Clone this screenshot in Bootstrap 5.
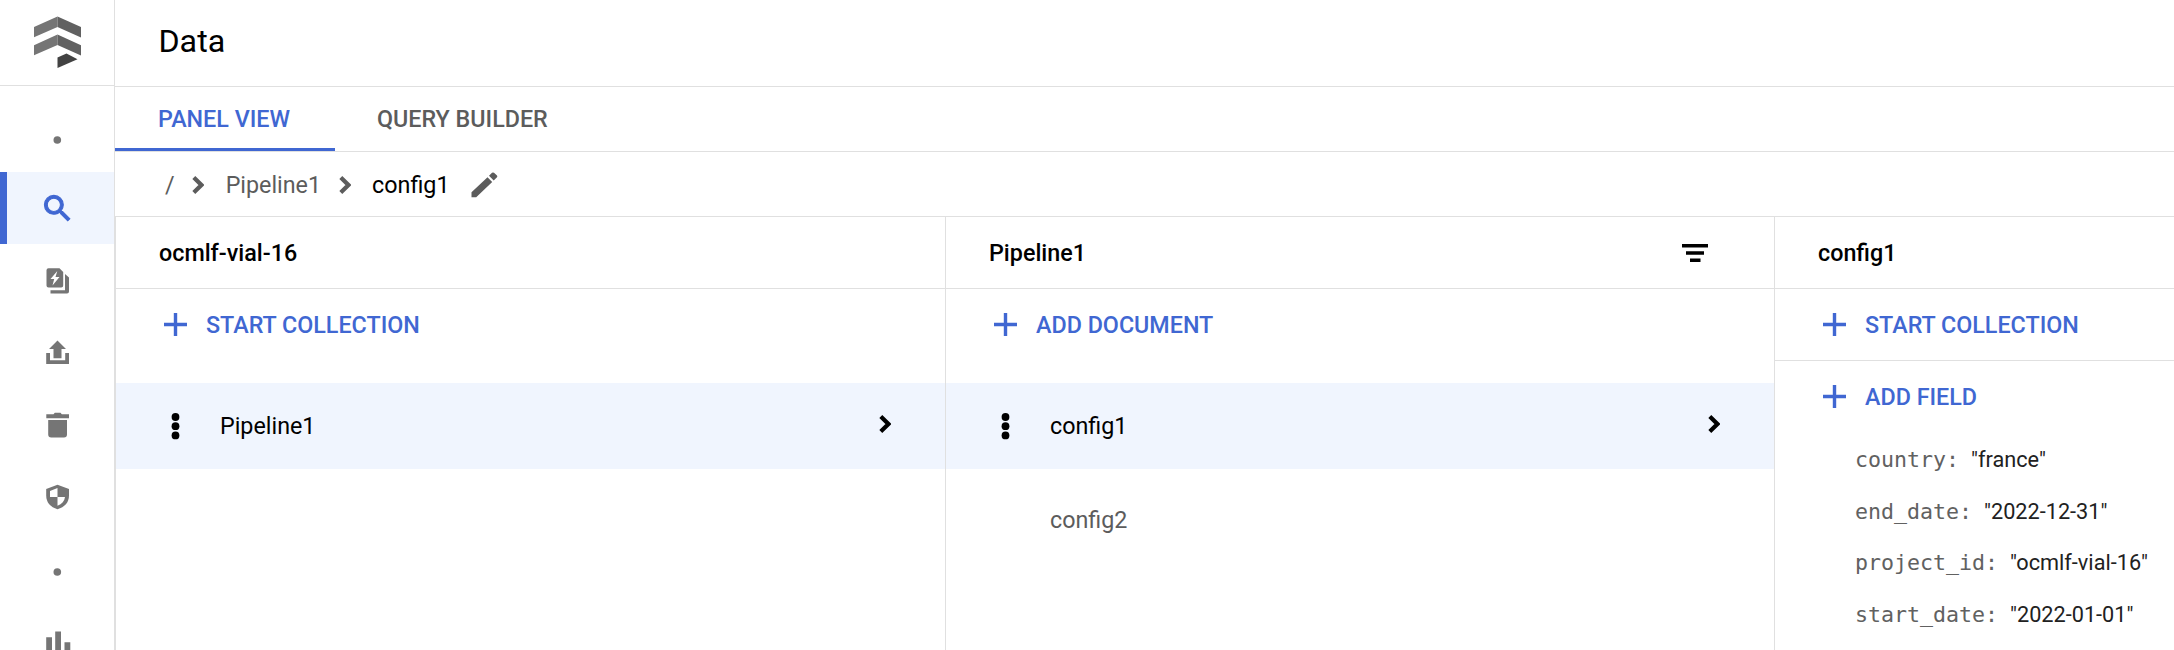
<!DOCTYPE html>
<html lang="en">
<head>
<meta charset="utf-8">
<title>Data</title>
<link href="https://cdn.jsdelivr.net/npm/bootstrap@5.3.0/dist/css/bootstrap.min.css" rel="stylesheet">
<style>
:root{--line:#e0e0e0;--blue:#4067d2;--tint:#f0f5fe;--ink:#000;--mute:#5c5c5c;--ico:#757575}
body{font-family:Roboto,sans-serif;font-size:23.3px;line-height:30px;color:var(--ink);height:650px;overflow:hidden}
svg{display:block;flex:none}
.rail{width:115px;border-right:1px solid var(--line);flex:none}
.rail-logo{height:86px;border-bottom:1px solid var(--line)}
.rail-item{height:72px;flex:none;color:var(--ico);padding-top:1px}
.rail-item svg,.rail-dot svg{margin-left:39px}
.rail-item.on{background:var(--tint);color:var(--blue);border-left:7px solid var(--blue);padding-top:0}
.rail-item.on svg{margin-left:33px}
.rail-dot{color:var(--ico);flex:none}
.rail-chart{padding-top:17px}
.title-bar{height:87px;border-bottom:1px solid var(--line);font-size:32.2px;padding:0 0 4px 43.5px}
.tabs{height:65px;border-bottom:1px solid var(--line);font-weight:500;color:var(--mute)}
.tab-a{padding:3px 42px 0 42px;height:64px;border-bottom:3px solid transparent}
.tab-a.on{color:var(--blue);border-color:var(--blue);width:220px;padding-left:43px}
.crumbs{height:65px;border-bottom:1px solid var(--line);color:var(--mute);padding:2px 0 0 50px}
.crumb-text{margin-left:22px}
.panel{border-left:1px solid var(--line);flex:none;width:829px}
.panel-first{width:830px}
.panel-head{height:72px;border-bottom:1px solid var(--line);padding:1px 66px 0 43px;font-weight:500}
.act{height:72px;color:var(--blue);font-weight:500;padding:0 0 1px 48px;gap:19px}
.act.ruled{border-bottom:1px solid var(--line);padding-bottom:0}
.entry{height:86px;padding-right:54px;margin-bottom:8px;color:var(--mute)}
.entry.on{background:var(--tint);color:var(--ink);margin-top:22px}
.entry .lbl{margin-left:104px}
.entry.on svg+.lbl{margin-left:37px}
.entry .go{margin-bottom:4px}
.dots{margin:0 0 1px 52px}
.field{height:51.5px;padding:3px 0 0 80px;color:#212121;gap:12px;font-size:21.7px}
.key{font-family:"DejaVu Sans Mono",monospace;font-size:21.6px;color:#616161}
</style>
</head>
<body>
<svg class="d-none">
<symbol id="chev" viewBox="0 0 12 18"><path d="M1.8 1.6l7.6 7.4-7.6 7.4" fill="none" stroke="currentColor" stroke-width="4.2"/></symbol>
<symbol id="plus" viewBox="0 0 23 23"><path d="M0 11.5H23M11.5 0V23" stroke="currentColor" stroke-width="3.4"/></symbol>
<symbol id="kebab" viewBox="0 0 15 28"><g fill="currentColor"><circle cx="7.5" cy="5" r="3.9"/><circle cx="7.5" cy="14.2" r="3.9"/><circle cx="7.5" cy="23.4" r="3.9"/></g></symbol>
</svg>
<div class="d-flex h-100">
  <nav class="rail d-flex flex-column overflow-hidden">
    <div class="rail-logo">
      <svg width="114" height="85"><path fill="#757575" d="M34 27L57.5 16.5V27L34 37.3zM34 45.2L57.5 34.6V45L34 55.3z"/><path fill="#616161" d="M57.5 16.5L81 27V37.5L57.5 27zM57.5 34.6L81 45.2V55.5L57.5 45z"/><path fill="#424242" d="M57.5 57.5L66.5 53.6 77.5 59.2 57.5 68z"/></svg>
    </div>
    <div class="rail-dot d-flex align-items-end pb-4" style="height:86px"><svg width="36" height="16"><circle cx="18.3" cy="8" r="3.8" fill="currentColor"/></svg></div>
    <div class="rail-item on d-flex align-items-center"><svg width="35" height="35" viewBox="0 0 24 24"><path fill="currentColor" stroke="currentColor" stroke-width=".7" d="M15.5 14h-.79l-.28-.27A6.47 6.47 0 0 0 16 9.5 6.5 6.5 0 1 0 9.5 16c1.61 0 3.09-.59 4.23-1.57l.27.28v.79l5 4.99L20.49 19l-4.99-5zm-6 0a4.5 4.5 0 1 1 0-9 4.5 4.5 0 0 1 0 9z"/></svg></div>
    <div class="rail-item d-flex align-items-center"><svg width="36" height="36"><path fill="currentColor" fill-rule="evenodd" d="M9.5 5.3H20.5L24.2 9V22.5a2 2 0 0 1-2 2H9.5a2 2 0 0 1-2-2V7.3a2 2 0 0 1 2-2zM18.3 8L11.5 16h3.7L13.5 22.5 20.5 14h-4z"/><path fill="currentColor" d="M26 11l4 3.5V28.5a2 2 0 0 1-2 2H11.5V27.3H26z"/></svg></div>
    <div class="rail-item d-flex align-items-center"><svg width="36" height="36"><path fill="currentColor" d="M18.5 5.5L27 14H22.5V23.3H14.5V14H10zM7.2 18H11v7.3H26.2V18H30V29H7.2z"/></svg></div>
    <div class="rail-item d-flex align-items-center"><svg width="36" height="36"><path fill="currentColor" d="M7.3 7.3H14.5L15.8 5.7H21.5L22.8 7.3H30V11.2H7.3zM9.2 13H28V27.5a3 3 0 0 1-3 3H12.2a3 3 0 0 1-3-3z"/></svg></div>
    <div class="rail-item d-flex align-items-center"><svg width="36" height="36"><path fill="currentColor" d="M18.5 5.8L30 10V16.5C30 23.5 25.5 28.3 18.5 30.2 11.5 28.3 7.2 23.5 7.2 16.5V10z"/><path fill="#fff" d="M18.5 9V18H11V12zM18.5 18H26C25.6 22 23 25 18.5 26.7z"/></svg></div>
    <div class="rail-dot d-flex align-items-center" style="height:80px"><svg width="36" height="16"><circle cx="18.3" cy="8" r="3.8" fill="currentColor"/></svg></div>
    <div class="rail-item rail-chart"><svg width="36" height="36"><path fill="currentColor" d="M7.2 8.3H13V34H7.2zM16.2 2.5H22V34H16.2zM25.5 13.3H31.3V34H25.5z"/></svg></div>
  </nav>
  <main class="flex-grow-1 d-flex flex-column overflow-hidden">
    <header class="title-bar d-flex align-items-center">Data</header>
    <div class="tabs d-flex"><div class="tab-a on d-flex align-items-center text-nowrap">PANEL VIEW</div><div class="tab-a d-flex align-items-center">QUERY BUILDER</div></div>
    <div class="crumbs d-flex align-items-center">
      <span>/</span><svg width="12" height="18" style="margin-left:17px"><use href="#chev"/></svg>
      <span class="crumb-text">Pipeline1</span><svg width="12" height="18" style="margin-left:18px"><use href="#chev"/></svg>
      <span class="crumb-text text-black" style="margin-left:21px">config1</span>
      <svg width="27" height="26" style="margin-left:21px"><path fill="currentColor" d="M.5 20.3L16.5 5.3 21.2 10 5.2 25.3H.5zM18 3.8L21 .8Q22 0 23 .8L26 3.6Q26.7 4.5 26 5.3L22.7 8.5z"/></svg>
    </div>
    <div class="d-flex flex-grow-1">
      <section class="panel panel-first">
        <div class="panel-head d-flex align-items-center">ocmlf-vial-16</div>
        <div class="act d-flex align-items-center"><svg width="23" height="23"><use href="#plus"/></svg>START COLLECTION</div>
        <div class="entry on d-flex align-items-center"><svg class="dots" width="15" height="28"><use href="#kebab"/></svg><span class="lbl">Pipeline1</span><svg class="go ms-auto" width="12" height="18"><use href="#chev"/></svg></div>
      </section>
      <section class="panel">
        <div class="panel-head d-flex align-items-center justify-content-between">Pipeline1<svg width="26" height="18"><path d="M0 0H26V3.6H0zM4 7.2H22V10.8H4zM8 14.4H18.5V18H8z"/></svg></div>
        <div class="act d-flex align-items-center"><svg width="23" height="23"><use href="#plus"/></svg>ADD DOCUMENT</div>
        <div class="entry on d-flex align-items-center"><svg class="dots" width="15" height="28"><use href="#kebab"/></svg><span class="lbl">config1</span><svg class="go ms-auto" width="12" height="18"><use href="#chev"/></svg></div>
        <div class="entry d-flex align-items-center"><span class="lbl">config2</span></div>
      </section>
      <section class="panel">
        <div class="panel-head d-flex align-items-center">config1</div>
        <div class="act ruled d-flex align-items-center"><svg width="23" height="23"><use href="#plus"/></svg>START COLLECTION</div>
        <div class="act d-flex align-items-center"><svg width="23" height="23"><use href="#plus"/></svg>ADD FIELD</div>
        <div class="field d-flex align-items-center"><span class="key">country:</span><span>"france"</span></div>
        <div class="field d-flex align-items-center"><span class="key">end_date:</span><span>"2022-12-31"</span></div>
        <div class="field d-flex align-items-center"><span class="key">project_id:</span><span>"ocmlf-vial-16"</span></div>
        <div class="field d-flex align-items-center"><span class="key">start_date:</span><span>"2022-01-01"</span></div>
      </section>
    </div>
  </main>
</div>
<script src="https://cdn.jsdelivr.net/npm/bootstrap@5.3.0/dist/js/bootstrap.bundle.min.js"></script>
</body>
</html>
